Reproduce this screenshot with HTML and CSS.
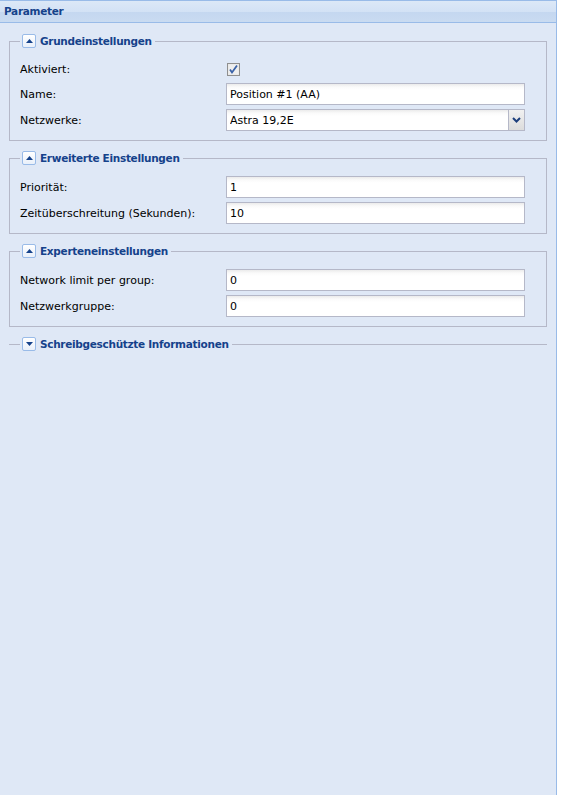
FILE: index.html
```html
<!DOCTYPE html>
<html lang="de">
<head>
    <meta charset="UTF-8">
    <meta name="viewport" content="width=device-width, initial-scale=1.0">
    <title>Parameter</title>
    <link rel="stylesheet" href="styles.css">
</head>
<body>

<div class="panel">
    <div class="panel-header">Parameter</div>

    <div class="panel-body">

        <!-- Grundeinstellungen -->
        <fieldset class="group">
            <legend><span class="toggle"><svg width="7" height="4" viewBox="0 0 7 4"><path d="M0 4 L3.5 0 L7 4 Z" fill="#15428b"/></svg></span>Grundeinstellungen</legend>
            <div class="row row-check">
                <label>Aktiviert:</label>
                <div class="field">
                    <span class="checkbox"><svg width="13" height="13" viewBox="0 0 13 13"><rect x="0.5" y="0.5" width="12" height="12" fill="#e6e6e6" stroke="#8f8f8f"/><rect x="1.5" y="1.5" width="10" height="10" fill="#eeeeee"/><path d="M3 6.5 L5 9.5 L10 2.5" fill="none" stroke="#3a62a8" stroke-width="1.8"/></svg></span>
                </div>
            </div>
            <div class="row">
                <label>Name:</label>
                <div class="field"><input class="text" type="text" value="Position #1 (AA)"></div>
            </div>
            <div class="row">
                <label>Netzwerke:</label>
                <div class="field combo">
                    <input class="text" type="text" value="Astra 19,2E">
                    <span class="trigger"><svg width="9" height="6" viewBox="0 0 9 6"><path d="M1 1 L4.5 4.5 L8 1" fill="none" stroke="#1d3f7c" stroke-width="2"/></svg></span>
                </div>
            </div>
        </fieldset>

        <!-- Erweiterte Einstellungen -->
        <fieldset class="group">
            <legend><span class="toggle"><svg width="7" height="4" viewBox="0 0 7 4"><path d="M0 4 L3.5 0 L7 4 Z" fill="#15428b"/></svg></span>Erweiterte Einstellungen</legend>
            <div class="row">
                <label>Priorität:</label>
                <div class="field"><input class="text" type="text" value="1"></div>
            </div>
            <div class="row">
                <label>Zeitüberschreitung (Sekunden):</label>
                <div class="field"><input class="text" type="text" value="10"></div>
            </div>
        </fieldset>

        <!-- Experteneinstellungen -->
        <fieldset class="group">
            <legend><span class="toggle"><svg width="7" height="4" viewBox="0 0 7 4"><path d="M0 4 L3.5 0 L7 4 Z" fill="#15428b"/></svg></span>Experteneinstellungen</legend>
            <div class="row">
                <label>Network limit per group:</label>
                <div class="field"><input class="text" type="text" value="0"></div>
            </div>
            <div class="row">
                <label>Netzwerkgruppe:</label>
                <div class="field"><input class="text" type="text" value="0"></div>
            </div>
        </fieldset>

        <!-- Schreibgeschützte Informationen (eingeklappt) -->
        <fieldset class="group collapsed">
            <legend><span class="toggle"><svg width="7" height="4" viewBox="0 0 7 4"><path d="M0 0 L3.5 4 L7 0 Z" fill="#15428b"/></svg></span>Schreibgeschützte Informationen</legend>
        </fieldset>

    </div>
</div>

</body>
</html>
```

FILE: styles.css
```css
* {
    margin: 0;
    padding: 0;
    box-sizing: border-box;
}

body {
    font-family: 'DejaVu Sans', sans-serif;
    font-size: 11px;
    color: #000;
    background-color: #fff;
}

.panel {
    width: 557px;
    min-height: 100vh;
    background-color: #dfe8f6;
    border-right: 1px solid #99bbe8;
}

.panel-header {
    height: 23px;
    padding: 0 4px;
    line-height: 21px;
    font-size: 10.5px;
    letter-spacing: -0.3px;
    font-weight: bold;
    color: #15428b;
    border-top: 1px solid #99bbe8;
    border-bottom: 1px solid #99bbe8;
    background: linear-gradient(to bottom, #dce8f7 0%, #d3e2f5 50%, #c4d7f0 52%, #c9dbf1 100%);
}

.panel-body {
    padding: 11px 9px 0 9px;
}

/* Fieldsets */
.group {
    border: 1px solid #b5b8c8;
    padding: 11px 21px 9px 10px;
    margin-bottom: 10px;
    min-width: 0;
}

.group legend {
    display: flex;
    align-items: center;
    height: 14px;
    padding: 0 3px 0 2px;
    font-size: 10.5px;
    letter-spacing: -0.3px;
    font-weight: bold;
    color: #15428b;
}

.toggle {
    width: 14px;
    height: 14px;
    margin-right: 4px;
    display: flex;
    align-items: center;
    justify-content: center;
    border: 1px solid #99bbe8;
    border-radius: 2px;
    background: linear-gradient(to bottom, #ffffff, #e9f0fa);
}

.group.collapsed {
    border-width: 1px 0 0 0;
    padding: 0 0 0 11px;
}

/* Rows */
.row {
    display: flex;
    align-items: center;
    height: 22px;
    margin-bottom: 4px;
}

.row:last-child {
    margin-bottom: 0;
}

.row-check {
    height: 20px;
}

.row label {
    width: 206px;
    flex-shrink: 0;
}

.field {
    flex: 1;
    display: flex;
    align-items: center;
}

.checkbox {
    display: flex;
    margin-left: 1px;
}

.text {
    width: 100%;
    height: 22px;
    border: 1px solid #b5b8c8;
    padding: 0 3px;
    font-family: 'DejaVu Sans', sans-serif;
    font-size: 11px;
    color: #000;
    background: linear-gradient(to bottom, #ebebeb 0, #fafafa 3px, #fff 6px);
    outline: none;
}

.combo .text {
    border-right: none;
}

.trigger {
    width: 17px;
    height: 22px;
    flex-shrink: 0;
    display: flex;
    align-items: center;
    justify-content: center;
    border: 1px solid #b5b8c8;
    background: linear-gradient(to bottom, #f1f1f1, #dcdcdc);
}
```
